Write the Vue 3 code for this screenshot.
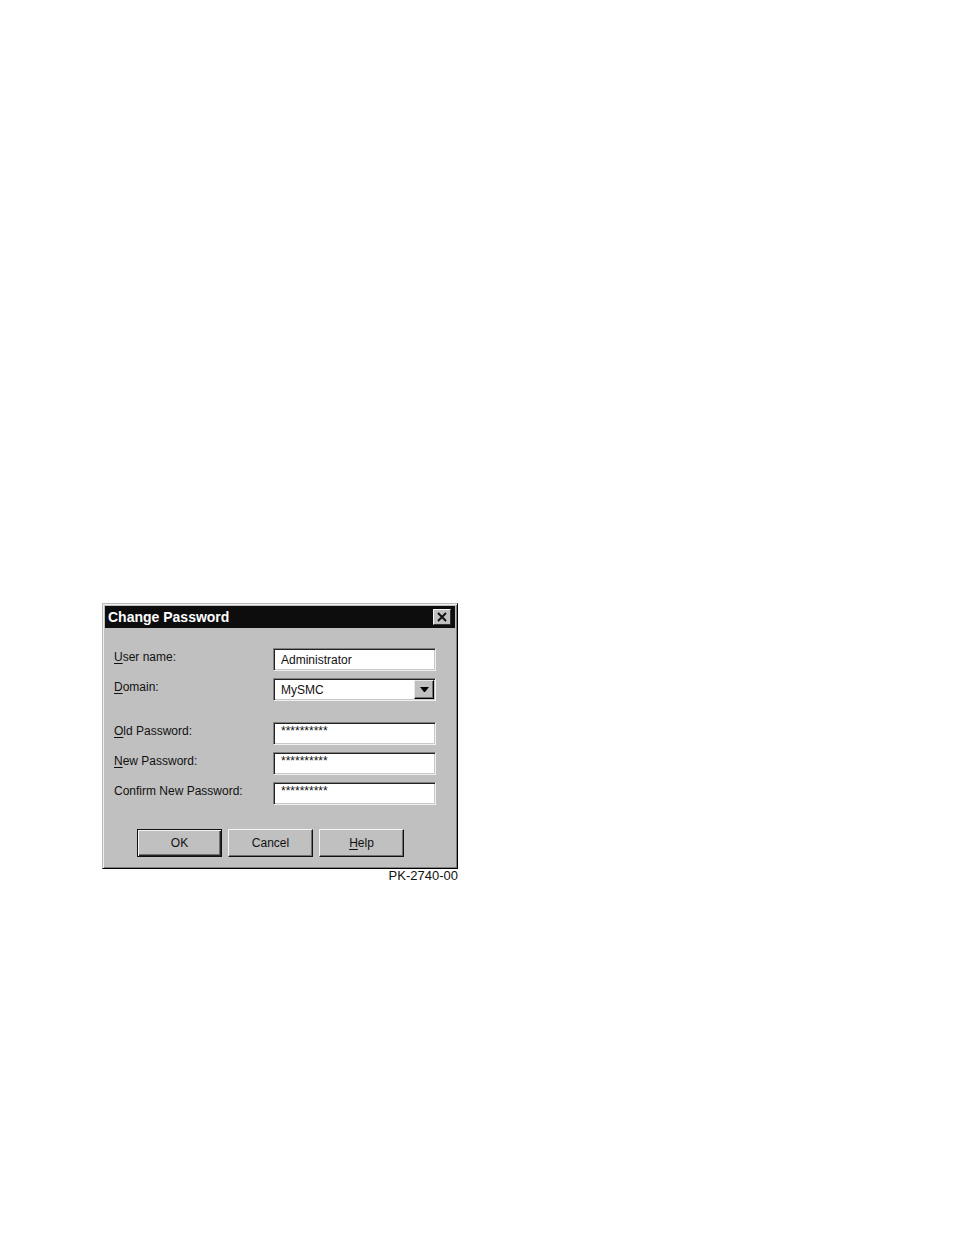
<script setup>
import { reactive } from 'vue'

const form = reactive({
  user: 'Administrator',
  domain: 'MySMC',
  oldPassword: '**********',
  newPassword: '**********',
  confirmPassword: '**********',
})
</script>

<template>
  <main class="page">
    <figure class="figure">
      <form class="dialog" role="dialog" aria-labelledby="dialog-title" @submit.prevent>
        <header class="titlebar">
          <h1 id="dialog-title" class="title">Change Password</h1>
          <button type="button" class="close" aria-label="Close">
            <svg viewBox="0 0 14 12" width="14" height="12" aria-hidden="true">
              <path d="M3 2 L11 10 M11 2 L3 10" fill="none" stroke="#111" stroke-width="2" />
            </svg>
          </button>
        </header>

        <div class="body">
          <div class="fields">
            <div class="row">
              <label for="user"><u>U</u>ser name:</label>
              <input id="user" v-model="form.user" class="box" type="text" />
            </div>
            <div class="row">
              <label for="domain"><u>D</u>omain:</label>
              <div class="combo">
                <select id="domain" v-model="form.domain" class="box">
                  <option>MySMC</option>
                </select>
                <span class="arrow" aria-hidden="true">
                  <svg viewBox="0 0 9 5" width="9" height="5">
                    <path d="M0 0 H9 L5 5 H4 Z" fill="#000" />
                  </svg>
                </span>
              </div>
            </div>
          </div>
          <div class="fields">
            <div class="row">
              <label for="old"><u>O</u>ld Password:</label>
              <input id="old" v-model="form.oldPassword" class="box secret" type="text" />
            </div>
            <div class="row">
              <label for="new"><u>N</u>ew Password:</label>
              <input id="new" v-model="form.newPassword" class="box secret" type="text" />
            </div>
            <div class="row">
              <label for="confirm">Confirm New Password:</label>
              <input id="confirm" v-model="form.confirmPassword" class="box secret" type="text" />
            </div>
          </div>

          <footer class="actions">
            <button type="submit" class="push default">OK</button>
            <button type="button" class="push">Cancel</button>
            <button type="button" class="push"><span><u>H</u>elp</span></button>
          </footer>
        </div>
      </form>
      <figcaption class="caption">PK-2740-00</figcaption>
    </figure>
  </main>
</template>

<style>
body {
  margin: 0;
  background: #fff;
}
</style>

<style scoped>
.page {
  padding: 603px 24px 24px 102px;
  font-family: "Liberation Sans", Arial, sans-serif;
  font-size: 12px;
  line-height: 16px;
  color: #111;
}

.page * {
  box-sizing: border-box;
}

.figure {
  width: fit-content;
  margin: 0;
}

.dialog {
  padding: 1px;
  background: #c0c0c0;
  border: 1px solid;
  border-color: #b8b8b8 #000 #000 #b8b8b8;
  box-shadow: inset 1px 1px #f0f0f0, inset -1px -1px #808080;
}

.titlebar {
  display: flex;
  align-items: center;
  justify-content: space-between;
  height: 22px;
  margin: 1px;
  padding: 0 4px 0 3px;
  background: #0d0d0d;
}

.title {
  margin: 0;
  font-size: 14px;
  line-height: 16px;
  font-weight: bold;
  color: #fff;
}

button {
  display: flex;
  align-items: center;
  justify-content: center;
  margin: 0;
  padding: 0;
  background: #c0c0c0;
  color: #111;
  font: inherit;
}

.close {
  width: 18px;
  height: 16px;
  border: 1px solid;
  border-color: #f4f4f4 #333 #333 #f4f4f4;
}

.body {
  padding: 19px 20px 10px 10px;
}

.fields {
  display: grid;
  gap: 7px;
  margin-bottom: 21px;
}

.row {
  display: grid;
  grid-template-columns: 159px minmax(0, 163px);
  align-items: start;
}

.row label {
  padding-top: 1px;
}

u {
  text-decoration: underline;
  text-underline-offset: 2px;
}

.box {
  display: block;
  width: 100%;
  height: 23px;
  margin: 0;
  padding: 1px 7px 0;
  appearance: none;
  background: #fff;
  border: 1px solid;
  border-color: #808080 #f0f0f0 #f0f0f0 #808080;
  border-radius: 0;
  box-shadow: inset 1px 1px #222, inset -1px -1px #c8c8c8;
  color: #111;
  font: inherit;
  outline: none;
}

.secret {
  padding-bottom: 6px;
}

.combo {
  position: relative;
}

.arrow {
  position: absolute;
  top: 2px;
  right: 2px;
  bottom: 2px;
  display: flex;
  align-items: center;
  justify-content: center;
  width: 20px;
  background: #c0c0c0;
  border: 1px solid;
  border-color: #e8e8e8 #000 #000 #e8e8e8;
  box-shadow: inset -1px -1px #707070;
  pointer-events: none;
}

.actions {
  display: flex;
  gap: 6px;
  padding: 3px 0 0 23px;
}

.push {
  width: 85px;
  height: 28px;
  border: 1px solid;
  border-color: #f4f4f4 #111 #111 #f4f4f4;
  box-shadow: inset -1px -1px #707070;
}

.default {
  border-color: #111;
  box-shadow: inset 1px 1px #f4f4f4, inset -1px -1px #222, inset -2px -2px #707070;
}

.caption {
  font-size: 13px;
  line-height: 14px;
  text-align: right;
}
</style>
